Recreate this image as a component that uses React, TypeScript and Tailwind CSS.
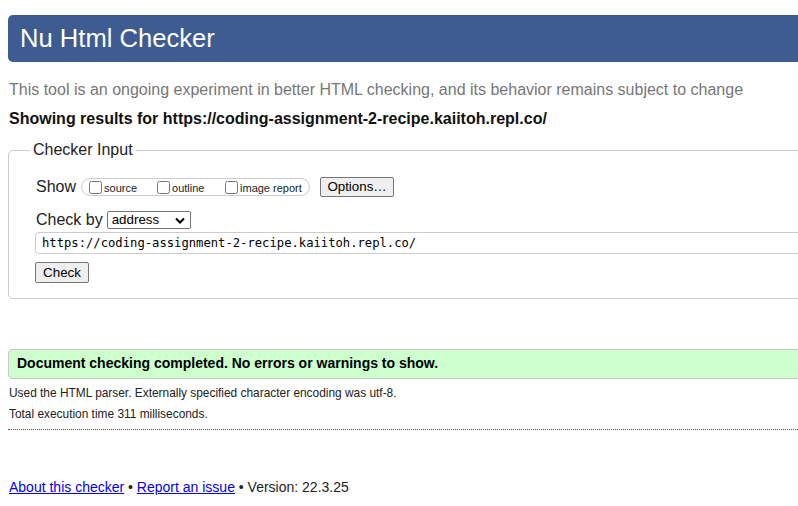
import React from "react";

export default function App() {
  return (
    <div className="w-[798px] h-[506px] overflow-hidden bg-white font-['Liberation_Sans',Arial,sans-serif] text-[#222]">
      <div className="w-[1000px] pt-[15px]">
        <div className="mx-[8px] h-[47px] bg-[#3e5b92] rounded-[5px] flex items-center">
          <h1 className="pl-[12px] text-[25.6px] leading-none text-white">Nu Html Checker</h1>
        </div>
        <p className="mt-[18px] ml-[9px] text-[16px] leading-[20px] text-[#777]">
          This tool is an ongoing experiment in better HTML checking, and its behavior remains subject to change
        </p>
        <p className="mt-[9px] ml-[9px] text-[16px] leading-[20px] font-bold text-[#111]">
          Showing results for https://coding-assignment-2-recipe.kaiitoh.repl.co/
        </p>

        <fieldset className="mt-[11px] mx-[8px] border border-[#ccc] rounded-[5px] pb-[14px]">
          <legend className="ml-[21px] px-[3px] text-[16px] leading-[20px] text-[#222]">Checker Input</legend>
          <div className="pl-[27px]">
            <div className="mt-[17px] flex items-center h-[20px]">
              <span className="text-[16px] leading-[20px]">Show</span>
              <div className="ml-[5px] h-[18px] w-[229px] border border-[#ccc] rounded-[9px] flex items-center text-[11px] pl-[7px]">
                <label className="flex items-center w-[68px]">
                  <input type="checkbox" className="m-0 w-[13px] h-[13px]" />
                  <span className="ml-[2px] mt-[2px]">source</span>
                </label>
                <label className="flex items-center w-[68px]">
                  <input type="checkbox" className="m-0 w-[13px] h-[13px]" />
                  <span className="ml-[2px] mt-[2px]">outline</span>
                </label>
                <label className="flex items-center">
                  <input type="checkbox" className="m-0 w-[13px] h-[13px]" />
                  <span className="ml-[2px] mt-[2px]">image report</span>
                </label>
              </div>
              <button className="ml-[10px] h-[20px] w-[74px] bg-[#efefef] border border-[#767676] rounded-[2px] text-[13.33px] leading-none text-black">
                Options…
              </button>
            </div>
            <div className="mt-[13px] flex items-center h-[20px]">
              <span className="text-[16px] leading-[20px]">Check by</span>
              <div className="ml-[4px] h-[18px] w-[84px] border border-[#767676] rounded-[2px] flex items-center justify-between pl-[4px] pr-[5px] text-[13.33px] text-black">
                <span>address</span>
                <svg width="10" height="7" viewBox="0 0 10 7">
                  <path d="M1 1.5 L5 5.5 L9 1.5" fill="none" stroke="#000" strokeWidth="2" />
                </svg>
              </div>
            </div>
            <div className="mt-[2px] -ml-[1px] h-[22px] border border-[#ccc] rounded-[4px] flex items-center pl-[6px] font-['DejaVu_Sans_Mono',monospace] text-[12.2px] text-black">
              https://coding-assignment-2-recipe.kaiitoh.repl.co/
            </div>
            <button className="mt-[8px] -ml-[1px] h-[21px] w-[54px] bg-[#efefef] border border-[#767676] rounded-[2px] text-[13.33px] leading-none text-black">
              Check
            </button>
          </div>
        </fieldset>

        <div className="mt-[50px] mx-[8px] h-[30px] bg-[#ccffcc] border border-[#c8c8c8] rounded-[4px] flex items-center pl-[8px]">
          <span className="text-[14px] font-bold text-black">Document checking completed. No errors or warnings to show.</span>
        </div>
        <p className="mt-[4px] ml-[9px] text-[11.9px] leading-[21px] text-[#222]">
          Used the HTML parser. Externally specified character encoding was utf-8.
        </p>
        <p className="ml-[9px] text-[11.9px] leading-[21px] text-[#222]">Total execution time 311 milliseconds.</p>
        <div className="mt-[4px] mx-[8px] border-t border-dotted border-[#555]" />
        <p className="mt-[47px] ml-[9px] text-[14px] leading-[20px] text-[#222]">
          <a className="text-[#00e] underline">About this checker</a>
          {" • "}
          <a className="text-[#00e] underline">Report an issue</a>
          {" • Version: 22.3.25"}
        </p>
      </div>
    </div>
  );
}
